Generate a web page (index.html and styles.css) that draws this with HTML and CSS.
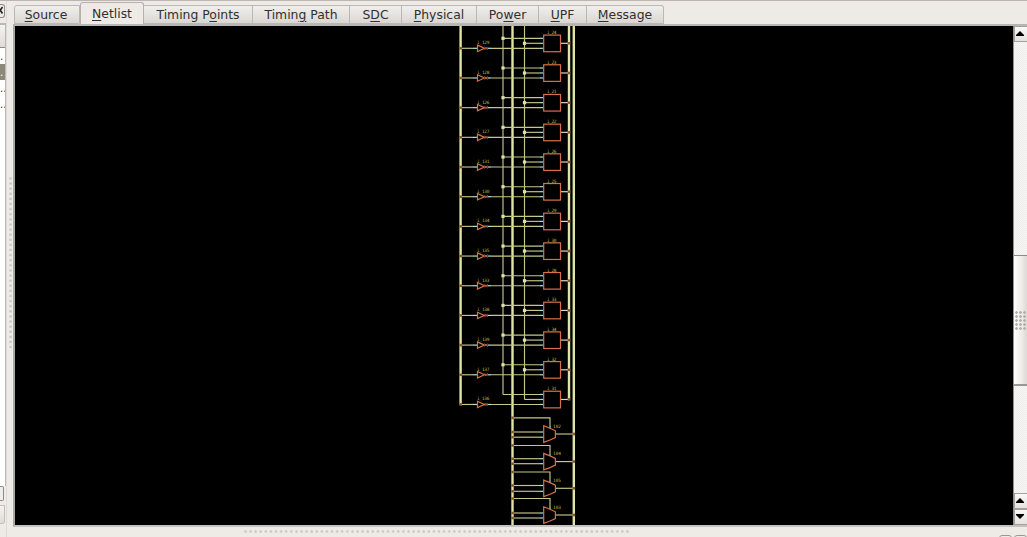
FILE: index.html
```html
<!DOCTYPE html>
<html lang="en">
<head>
<meta charset="utf-8">
<title>Netlist viewer</title>
<link rel="stylesheet" href="styles.css">
</head>
<body>
<div class="window">
  <aside class="dock">
    <div class="dock-close"><svg width="4" height="12" viewBox="0 0 4 12"><path d="M-2 2L2.5 8.5M2.5 2L-2 8.5" stroke="#222" stroke-width="1.6"/></svg></div>
    <div class="dock-list">
      <div class="dock-head"></div>
      <div class="dock-row">.</div>
      <div class="dock-row selected">.</div>
      <div class="dock-row">..</div>
      <div class="dock-row">..</div>
    </div>
    <div class="dock-scroll"></div>
    <div class="dock-foot"></div>
  </aside>
  <div class="splitter-v"><i class="grip-v"></i></div>
  <main class="main">
    <nav class="tabs">
      <span class="tab source"><span><u>S</u>ource</span></span>
      <span class="tab netlist active"><span><u>N</u>etlist</span></span>
      <span class="tab points"><span>Timing P<u>o</u>ints</span></span>
      <span class="tab path"><span>Timin<u>g</u> Path</span></span>
      <span class="tab sdc"><span>S<u>D</u>C</span></span>
      <span class="tab physical"><span><u>P</u>hysical</span></span>
      <span class="tab power"><span>Po<u>w</u>er</span></span>
      <span class="tab upf"><span><u>U</u>PF</span></span>
      <span class="tab message"><span><u>M</u>essage</span></span>
    </nav>
    <section class="view">
      <svg class="schematic" id="schematic" width="998" height="499" viewBox="15 26 998 499"></svg>
      <div class="scrollbar">
        <div class="arrow"><svg width="8" height="5" viewBox="0 0 8 5"><path d="M0 5V4L4 0L8 4V5Z"/></svg></div>
        <div class="trough before"></div>
        <div class="thumb"><i class="thumb-grip"></i></div>
        <div class="trough after"></div>
        <div class="arrow"><svg width="8" height="5" viewBox="0 0 8 5"><path d="M0 5V4L4 0L8 4V5Z"/></svg></div>
        <div class="arrow"><svg width="8" height="5" viewBox="0 0 8 5"><path d="M0 0V1L4 5L8 1V0Z"/></svg></div>
      </div>
    </section>
    <footer class="splitter-h"><i class="grip-h"></i><span class="dock-button"></span><span class="dock-button last"></span></footer>
  </main>
</div>
<script src="schematic.js"></script>
</body>
</html>
```
FILE: styles.css
```css
* { box-sizing: border-box; }
body { margin: 0; overflow: hidden; font-family: "DejaVu Sans", sans-serif; font-size: 12.4px; color: #303030; background: #eeebe7; }
.window { display: flex; width: 1027px; height: 537px; border-top: 1px solid #bcb5b2; background: #eeebe7; }

.dock { width: 6px; display: flex; flex-direction: column; flex: none; overflow: hidden; }
.dock-close { width: 5px; height: 14px; margin-top: 3px; border: 1px solid #8d8985; border-left: 0; border-radius: 0 3px 3px 0; overflow: hidden; }
.dock-close svg { display: block; }
.dock-list { margin-top: 5px; height: 463px; width: 6px; background: #fff; border-right: 1px solid #bcb8b5; border-top: 2px solid #bcb8b5; }
.dock-head { height: 23px; background: linear-gradient(#f5f3f1, #dedbd7); border-bottom: 1px solid #8d8985; }
.dock-row { height: 16px; width: 5px; line-height: 18px; font-size: 10px; letter-spacing: 0; overflow: hidden; }
.dock-row.selected { background: #8c8979; color: #fff; }
.dock-scroll { width: 4px; height: 15px; border: 1px solid #8d8985; border-left: 0; border-radius: 0 2px 2px 0; background: #efedea; }
.dock-foot { width: 5px; height: 19px; margin-top: 4px; border: 1px solid #c3bfbb; border-left: 0; border-radius: 0 0 3px 0; background: linear-gradient(#f4f2f0, #dfdcd8); }

.splitter-v { flex: none; width: 7px; padding: 176px 0 0 2px; border-left: 1px solid #dedad7; }
.grip-v { display: block; width: 4px; height: 171px; background: radial-gradient(circle at 1.5px 1.5px, #cdc9c5 1px, transparent 1.6px) 0 0 / 4px 5.12px; }

.main { flex: 1; display: flex; flex-direction: column; min-width: 0; }
.tabs { height: 23px; padding: 1px 0 0 1px; display: flex; align-items: flex-end; flex: none; }
.tab { height: 19px; display: flex; align-items: center; justify-content: center; border: 1px solid #bab7b4; border-left-width: 0; background: linear-gradient(#f1efec, #dad7d2); white-space: nowrap; line-height: 14px; }
.tab u { text-decoration: underline; text-underline-offset: 2px; text-decoration-thickness: 1px; }
.tab.active { height: 22px; border: 1px solid #b3b0ad; border-bottom: 0; border-radius: 3px 3px 0 0; background: #eeebe7; }
.source { width: 66px; border-left-width: 1px; border-radius: 3px 0 0 0; padding-right: 2px; }
.netlist { width: 64px; }
.points { width: 109px; }
.path { width: 97px; }
.sdc { width: 52px; }
.physical { width: 75px; }
.power { width: 62px; }
.upf { width: 48px; }
.message { width: 77px; border-radius: 0 3px 0 0; }

.view { height: 503px; display: flex; flex: none; border: 2px solid #aaa8a5; border-right: 0; border-top-color: #b8b6b4; border-bottom-color: #c5c1be; background: #000; }
.schematic { display: block; flex: none; }
.wire { stroke: #c6c887; stroke-width: 1.15; fill: none; }
.bus { stroke: #dfe5a6; stroke-width: 2.4; }
.pin { stroke: #a8e6e0; stroke-width: 1.2; }
.out { stroke: #eed9a2; stroke-width: 1.2; }
.gate { stroke: #d8714a; stroke-width: 1.2; fill: #000; }
.cross { stroke: #d8714a; stroke-width: 0.9; }
.junction { fill: #dfe2a2; }
.tap { fill: #87552f; }
.label { font: 4.5px "DejaVu Sans Mono", monospace; fill: #b9b94a; }

.scrollbar { width: 14px; flex: none; display: flex; flex-direction: column; border-left: 1px solid #96918d; overflow: hidden; }
.arrow { height: 16px; width: 16px; flex: none; display: flex; align-items: center; justify-content: center; padding: 0 4px 2px 0; border: 1px solid #a5a19d; background: linear-gradient(#faf9f8, #e5e2df); }
.trough { background: repeating-conic-gradient(#f8f7f6 0 25%, #efedeb 0 50%) 0 0 / 2px 2px; }
.before { height: 213px; }
.after { flex: 1; }
.thumb { height: 131px; padding: 55px 0 0 1px; border-top: 1px solid #8e8a86; border-bottom: 2px solid #9b9793; background: linear-gradient(90deg, #fff, #eeebe8 60%, #dcd8d4); }
.thumb-grip { display: block; width: 11px; height: 20px; background: radial-gradient(circle at 1.5px 1.5px, #b5b1ad 1px, transparent 1.6px) 0 0 / 4px 4px; }

.splitter-h { flex: 1; display: flex; align-items: flex-start; padding: 3px 0 0 231px; }
.grip-h { width: 388px; height: 4px; background: radial-gradient(circle at 1.5px 1.5px, #cdc9c5 1px, transparent 1.6px) 0 0 / 5.1px 4px; }
.dock-button { width: 13px; height: 8px; margin: 5px 0 0 369px; border: 1px solid #9b9793; border-radius: 3px 3px 0 0; }
.dock-button.last { margin-left: 2px; }
```
FILE: schematic.js
```js
const BUS_A = 460.6, BUS_B = 512.5, BUS_C = 569, BUS_D = 573.8;
const NET_1 = 503, NET_2 = 524.5;
const FIRST = 48.3, PITCH = 29.68;

// Each row pairs an inverter with the cell it drives.
const rows = [[129, 24], [128, 23], [126, 21], [127, 22], [131, 26], [130, 25], [134, 29],
  [135, 30], [133, 28], [138, 33], [139, 34], [137, 32], [136, 31]];

// Multiplexers: name, select line, two inputs, output.
const muxes = [["102", 417.8, 432, 437.2, 434], ["104", 445.5, 458.7, 463.7, 461.6],
  ["105", 472, 485.5, 491.3, 488.3], ["103", 498.5, 513, 518, 515]];

const line = (x1, y1, x2, y2, c = "wire") => `<path class="${c}" d="M${x1} ${y1}L${x2} ${y2}"/>`;
const square = (x, y, s, c) => `<rect class="${c}" x="${x - s / 2}" y="${y - s / 2}" width="${s}" height="${s}"/>`;
const lastY = FIRST + PITCH * 12;

let out = line(BUS_A, 26, BUS_A, lastY, "bus") + line(BUS_B, 26, BUS_B, 525, "bus")
  + line(BUS_C, 26, BUS_C, lastY - 5, "bus") + line(BUS_D, 26, BUS_D, 525, "bus")
  + line(NET_1, 26, NET_1, lastY - 10) + line(NET_2, 26, NET_2, lastY - 5);

rows.forEach(([inv, cell], i) => {
  const y = FIRST + PITCH * i;
  out += line(BUS_A, y, 473, y) + line(473, y, 477, y, "pin")
    + line(487.5, y, 491, y, "pin") + line(491, y, 540, y)
    + line(NET_1, y - 10, 540, y - 10) + line(NET_2, y - 5, 540, y - 5);
  for (const d of [10, 5, 0]) out += line(540, y - d, 543.5, y - d, "pin");
  if (i < 12) out += square(NET_1, y - 10, 3.2, "junction") + square(NET_2, y - 5, 3.2, "junction");
  out += `<path class="gate" d="M477.5 ${y - 3.2}L484.4 ${y}L477.5 ${y + 3.2}Z"/>`
    + `<path class="cross" d="M484.6 ${y - 1.5}L487.6 ${y + 1.5}M484.6 ${y + 1.5}L487.6 ${y - 1.5}"/>`
    + `<rect class="gate" x="543.7" y="${y - 13.2}" width="16.8" height="16.6"/>`
    + line(561, y - 5, 564, y - 5, "pin") + line(564, y - 5, BUS_C, y - 5, "out")
    + square(BUS_A, y, 2.6, "tap") + square(BUS_C, y - 5, 2.6, "tap")
    + `<text class="label" x="477" y="${y - 4}" textLength="12.5">i_${inv}</text>`
    + `<text class="label" x="547" y="${y - 14.2}" textLength="9.5">i_${cell}</text>`;
});

muxes.forEach(([name, sel, a, b, y]) => {
  out += `<path class="wire" d="M${BUS_B} ${sel}H550V${y - 8}"/>` + line(550, y - 8, 550, y - 5, "pin");
  for (const v of [a, b]) out += line(BUS_B, v, 540, v) + line(540, v, 543.5, v, "pin");
  out += line(555.5, y, BUS_D, y)
    + `<path class="gate" d="M543.7 ${y - 8.2}L550 ${y - 5.7}L555.4 ${y - 3.2}V${y + 3.5}L550 ${y + 6}L543.7 ${y + 8.3}Z"/>`
    + square(BUS_D, y, 2.6, "tap");
  for (const v of [sel, a, b]) out += square(BUS_B, v, 2.6, "tap");
  out += `<text class="label" x="553" y="${y - 6.2}" textLength="8">${name}</text>`;
});

document.getElementById("schematic").innerHTML = out;
```
